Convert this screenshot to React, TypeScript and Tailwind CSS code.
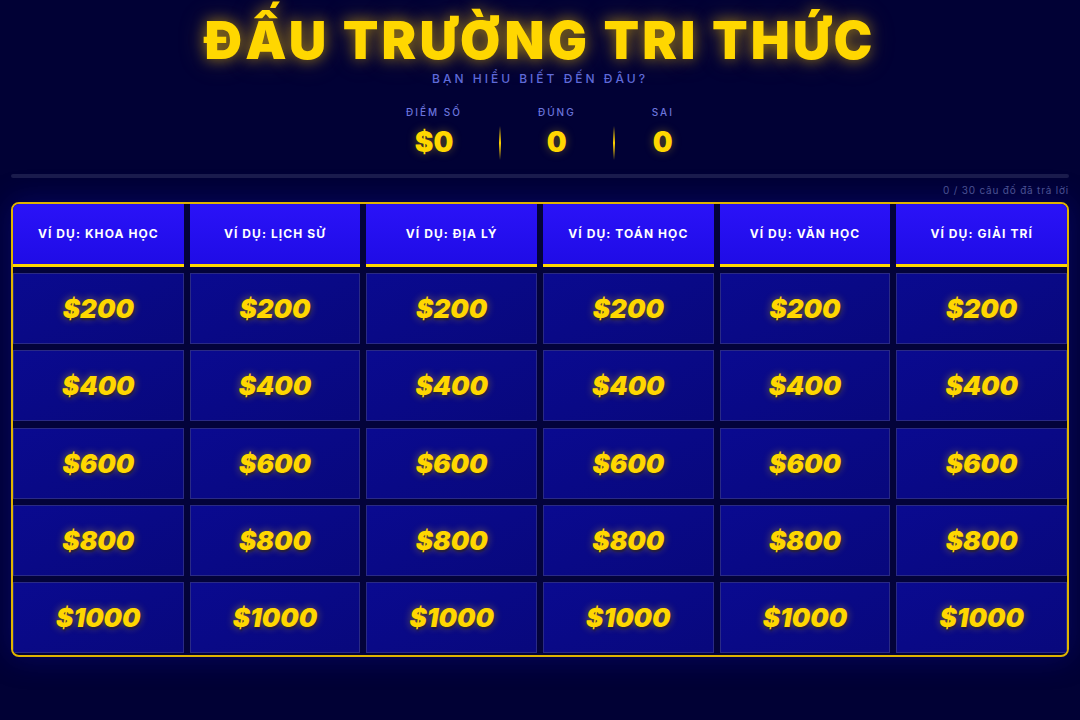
import React from "react";

const categories = [
  "Ví dụ: Khoa học",
  "Ví dụ: Lịch sử",
  "Ví dụ: Địa lý",
  "Ví dụ: Toán học",
  "Ví dụ: Văn học",
  "Ví dụ: Giải trí",
];

const values = [200, 400, 600, 800, 1000];

const Stat = ({ label, value }: { label: string; value: string }) => (
  <div className="flex flex-col items-center">
    <span className="text-[10px] font-medium tracking-[0.2em] text-[#6b74dc] leading-none">{label}</span>
    <span className="mt-[11px] text-[28px] font-black leading-none text-[#ffd700] [text-shadow:0_0_10px_rgba(255,215,0,0.35)]">
      {value}
    </span>
  </div>
);

const Divider = () => (
  <div className="h-[34px] w-[2px] bg-gradient-to-b from-transparent via-[#ffd000] to-transparent self-end mb-[-4px]" />
);

export default function App() {
  return (
    <div
      className="min-h-[720px] w-full bg-[#010135] px-[11px] pb-10 text-white"
      style={{ fontFamily: "Inter, 'Noto Sans', sans-serif" }}
    >
      <div className="flex flex-col items-center pt-[12px]">
        <h1 className="text-[52px] font-black leading-[58px] tracking-[0.06em] text-[#ffd700] [text-shadow:0_0_14px_rgba(255,200,0,0.55),0_0_28px_rgba(255,200,0,0.25)]">
          ĐẤU TRƯỜNG TRI THỨC
        </h1>
        <p className="mt-[3px] text-[12px] font-medium tracking-[0.25em] text-[#5f6ad8] leading-none">
          BẠN HIỂU BIẾT ĐẾN ĐÂU?
        </p>
        <div className="mt-[22px] flex items-center gap-[37px]">
          <Stat label="ĐIỂM SỐ" value="$0" />
          <Divider />
          <Stat label="ĐÚNG" value="0" />
          <Divider />
          <Stat label="SAI" value="0" />
        </div>
      </div>

      <div className="mt-[18px] h-[4px] w-full rounded-full bg-[#1b1c4c]" />
      <div className="mt-[7px] text-right text-[10px] tracking-[0.08em] text-[#4b5193] leading-none">
        0 / 30 câu đố đã trả lời
      </div>

      <div className="mt-[7px] rounded-[8px] border-2 border-[#e0b400] bg-[#03033a] shadow-[0_0_30px_rgba(20,20,180,0.35)] overflow-hidden">
        <div className="grid grid-cols-6 gap-x-[6px]">
          {categories.map((c) => (
            <div
              key={c}
              className="flex h-[63px] items-center justify-center border-b-[3px] border-[#ffd700] bg-gradient-to-b from-[#2a12f8] to-[#1f0ce6]"
            >
              <span className="text-[12px] font-bold uppercase tracking-[0.09em] text-white">{c}</span>
            </div>
          ))}
        </div>
        <div className="mt-[6px] grid grid-cols-6 gap-x-[6px] gap-y-[6.3px]">
          {values.map((v) =>
            categories.map((c) => (
              <div
                key={c + v}
                className="flex h-[71px] items-center justify-center border border-[#2a2a85] bg-gradient-to-br from-[#0a0a90] to-[#08087c]"
              >
                <span className="text-[26px] font-black italic text-[#ffd700] [text-shadow:0_0_8px_rgba(255,210,0,0.45),1px_2px_2px_rgba(0,0,0,0.5)]">
                  ${v}
                </span>
              </div>
            ))
          )}
        </div>
        <div className="h-[2px]" />
      </div>
    </div>
  );
}
